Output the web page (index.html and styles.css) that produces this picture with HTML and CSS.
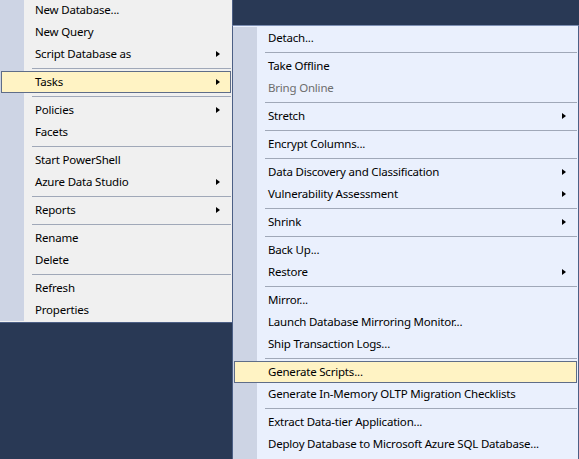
FILE: index.html
```html
<!DOCTYPE html>
<html>
<head>
<meta charset="utf-8">
<link rel="stylesheet" href="styles.css">
</head>
<body>
<div class="desktop">
  <div class="menu menu-main">
    <div class="item">New Database...</div>
    <div class="item">New Query</div>
    <div class="item sub">Script Database as</div>
    <div class="sep"></div>
    <div class="item sub hot">Tasks</div>
    <div class="sep"></div>
    <div class="item sub">Policies</div>
    <div class="item">Facets</div>
    <div class="sep"></div>
    <div class="item">Start PowerShell</div>
    <div class="item sub">Azure Data Studio</div>
    <div class="sep"></div>
    <div class="item sub">Reports</div>
    <div class="sep"></div>
    <div class="item">Rename</div>
    <div class="item">Delete</div>
    <div class="sep"></div>
    <div class="item">Refresh</div>
    <div class="item">Properties</div>
  </div>
  <div class="menu menu-tasks">
    <div class="item">Detach...</div>
    <div class="sep"></div>
    <div class="item">Take Offline</div>
    <div class="item disabled">Bring Online</div>
    <div class="sep"></div>
    <div class="item sub">Stretch</div>
    <div class="sep"></div>
    <div class="item">Encrypt Columns...</div>
    <div class="sep"></div>
    <div class="item sub">Data Discovery and Classification</div>
    <div class="item sub">Vulnerability Assessment</div>
    <div class="sep"></div>
    <div class="item sub">Shrink</div>
    <div class="sep"></div>
    <div class="item">Back Up...</div>
    <div class="item sub">Restore</div>
    <div class="sep"></div>
    <div class="item">Mirror...</div>
    <div class="item">Launch Database Mirroring Monitor...</div>
    <div class="item">Ship Transaction Logs...</div>
    <div class="sep"></div>
    <div class="item hot">Generate Scripts...</div>
    <div class="item">Generate In-Memory OLTP Migration Checklists</div>
    <div class="sep"></div>
    <div class="item">Extract Data-tier Application...</div>
    <div class="item">Deploy Database to Microsoft Azure SQL Database...</div>
  </div>
</div>
</body>
</html>
```
FILE: styles.css
```css
html, body {
  margin: 0;
  padding: 0;
  background: #293955;
  overflow: hidden;
}
.desktop {
  position: relative;
  width: 579px;
  height: 459px;
  overflow: hidden;
  font-family: "Noto Sans", "Open Sans", sans-serif;
  font-size: 11.5px;
  letter-spacing: -0.2px;
  color: #000;
}
.menu {
  position: absolute;
  box-sizing: border-box;
  padding: 1px 0;
  border: 1px solid #4c5f85;
  background-color: #f0f0f0;
  background-image: linear-gradient(#cdd4e4, #cdd4e4);
  background-repeat: no-repeat;
  background-origin: content-box;
  background-size: 24px 100%;
}
.menu-main {
  left: -1px;
  top: -3px;
  width: 234px;
}
.menu-tasks {
  left: 232px;
  top: 25px;
  width: 347px;
  height: 460px;
  background-color: #eaf0fd;
  border-top-color: #7d8fb3;
}
.item {
  position: relative;
  display: flex;
  align-items: center;
  height: 22px;
  box-sizing: border-box;
  margin: 0 1px;
  padding: 0 0 2px 33px;
  border: 1px solid transparent;
  white-space: nowrap;
}
.item.hot {
  background: #fff3c4;
  border-color: #5f6d88;
}
.item.disabled {
  color: #6d6d6d;
}
.item.sub::after {
  content: "";
  position: absolute;
  right: 10px;
  top: 7px;
  width: 0;
  height: 0;
  border-left: 4px solid #000;
  border-top: 3.5px solid transparent;
  border-bottom: 3.5px solid transparent;
}
.sep {
  height: 1px;
  margin: 3px 1px 2px 32px;
  background: #a0a8b8;
}
```
